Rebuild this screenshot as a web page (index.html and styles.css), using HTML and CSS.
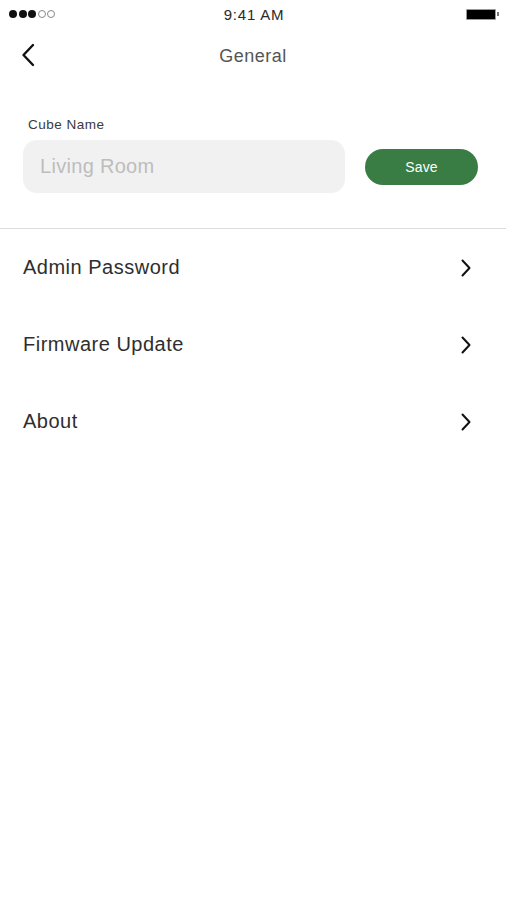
FILE: index.html
```html
<!DOCTYPE html>
<html>
    <head>
        <meta charset="utf-8">
        <title>General</title>
        <meta name="viewport" content="width=device-width, initial-scale=1.0">
        <link rel="stylesheet" href="styles.css">
    </head>
    <body>
        <div class="status-bar">
            <div class="signal">
                <span class="dot"></span><span class="dot"></span><span class="dot"></span><span class="dot dot--empty"></span><span class="dot dot--empty"></span>
            </div>
            <div class="status-bar__time">9:41 AM</div>
            <div class="battery"><span class="battery__body"></span><span class="battery__nub"></span></div>
        </div>

        <header class="nav">
            <a class="nav__back" href="#">
                <svg width="14" height="24" viewBox="0 0 14 24"><path d="M12 2 L2.5 12 L12 22" fill="none" stroke="#111" stroke-width="2.4" stroke-linecap="round" stroke-linejoin="round"/></svg>
            </a>
            <h1 class="nav__title">General</h1>
        </header>

        <section class="name-form">
            <label class="name-form__label" for="cube-name">Cube Name</label>
            <div class="name-form__row">
                <input class="name-form__input" id="cube-name" type="text" placeholder="Living Room">
                <button class="name-form__save" type="button">Save</button>
            </div>
        </section>

        <ul class="menu">
            <li class="menu__item">
                <span>Admin Password</span>
                <svg class="menu__arrow" width="12" height="18" viewBox="0 0 12 18"><path d="M2.5 1.5 L9.5 9 L2.5 16.5" fill="none" stroke="#111" stroke-width="2" stroke-linecap="round" stroke-linejoin="round"/></svg>
            </li>
            <li class="menu__item">
                <span>Firmware Update</span>
                <svg class="menu__arrow" width="12" height="18" viewBox="0 0 12 18"><path d="M2.5 1.5 L9.5 9 L2.5 16.5" fill="none" stroke="#111" stroke-width="2" stroke-linecap="round" stroke-linejoin="round"/></svg>
            </li>
            <li class="menu__item">
                <span>About</span>
                <svg class="menu__arrow" width="12" height="18" viewBox="0 0 12 18"><path d="M2.5 1.5 L9.5 9 L2.5 16.5" fill="none" stroke="#111" stroke-width="2" stroke-linecap="round" stroke-linejoin="round"/></svg>
            </li>
        </ul>
    </body>
</html>
```

FILE: styles.css
```css
:root {
    --font-main: 'Liberation Sans', Arial, Helvetica, sans-serif;

    --color-text: #2e2e2e;
    --color-title: #555;
    --color-label: #3a3a3a;
    --color-placeholder: #bdbdbd;
    --color-input: #f1f1f1;
    --color-green: #3a7d44;
    --color-line: #dcdcdc;
    --color-white: #fff;

    --size-side: 23px;
}
html, body {
    margin: 0;
    padding: 0;
    background: var(--color-white);
}
body {
    width: 506px;
    height: 900px;
    font-family: var(--font-main);
    color: var(--color-text);
}
.status-bar {
    height: 28px;
    display: flex;
    align-items: center;
    justify-content: space-between;
    padding: 0 7px 0 9px;
}
.signal {
    display: flex;
    gap: 1.5px;
    width: 80px;
}
.dot {
    width: 8px;
    height: 8px;
    border-radius: 50%;
    background: #111;
    box-sizing: border-box;
}
.dot--empty {
    background: none;
    border: 1px solid #888;
}
.status-bar__time {
    font-size: 15px;
    letter-spacing: 0.8px;
    color: #2a2a2a;
}
.battery {
    width: 80px;
    display: flex;
    justify-content: flex-end;
    align-items: center;
}
.battery__body {
    width: 30px;
    height: 11px;
    background: #000;
    border: 1px solid #999;
    box-sizing: border-box;
    border-radius: 1px;
}
.battery__nub {
    width: 2px;
    height: 4px;
    margin-left: 1px;
    background: #777;
}
.nav {
    height: 56px;
    position: relative;
    display: flex;
    align-items: center;
    justify-content: center;
}
.nav__back {
    position: absolute;
    left: 21px;
    top: 15px;
    display: block;
    height: 24px;
}
.nav__title {
    margin: 0;
    font-size: 18px;
    letter-spacing: 0.5px;
    font-weight: normal;
    color: var(--color-title);
}
.name-form {
    padding: 33px var(--size-side) 35px;
    border-bottom: 1px solid var(--color-line);
}
.name-form__label {
    display: block;
    font-size: 13.5px;
    letter-spacing: 0.5px;
    line-height: 16px;
    color: var(--color-label);
    padding-left: 5px;
    margin-bottom: 7px;
}
.name-form__row {
    display: flex;
    align-items: center;
    gap: 20px;
}
.name-form__input {
    width: 322px;
    height: 53px;
    box-sizing: border-box;
    border: 0;
    border-radius: 14px;
    background: var(--color-input);
    padding: 0 17px;
    font-family: var(--font-main);
    font-size: 20px;
    letter-spacing: 0.3px;
    outline: none;
}
.name-form__input::placeholder {
    color: var(--color-placeholder);
}
.name-form__save {
    width: 113px;
    height: 36px;
    border: 0;
    border-radius: 18px;
    background: var(--color-green);
    color: var(--color-white);
    font-family: var(--font-main);
    font-size: 14px;
    letter-spacing: 0.2px;
    cursor: pointer;
}
.menu {
    list-style: none;
    margin: 0;
    padding: 0;
}
.menu__item {
    height: 77px;
    display: flex;
    align-items: center;
    justify-content: space-between;
    padding: 0 34px 0 var(--size-side);
    font-size: 20px;
    letter-spacing: 0.5px;
    color: var(--color-text);
}
```
